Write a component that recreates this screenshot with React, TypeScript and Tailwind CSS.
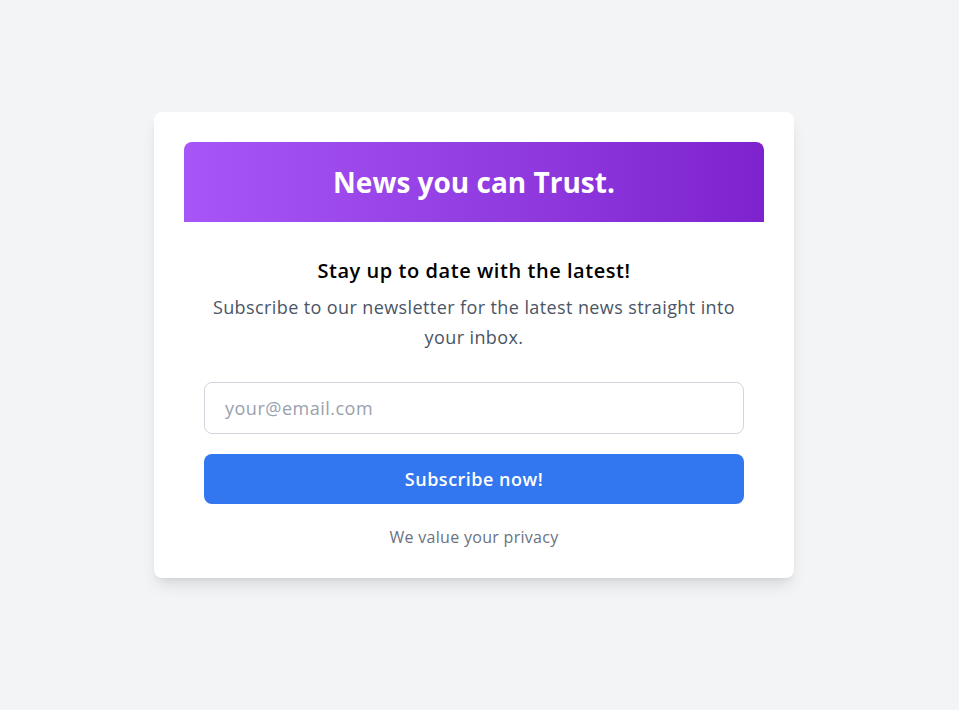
import React from 'react';

function App() {
  return (
    <div className="min-h-screen bg-gray-100 pt-[112px] pl-[154px]" style={{ fontFamily: '"Open Sans", "Noto Sans", sans-serif' }}>
      <div className="w-[640px] bg-white rounded-lg shadow-lg p-[30px]">
        <div className="h-[80px] rounded-t-lg bg-gradient-to-r from-[#a855f7] to-[#7e22ce] flex items-center justify-center">
          <h1 className="text-[28px] font-bold text-white">News you can Trust.</h1>
        </div>
        <div className="px-5 pt-[34px] text-center">
          <h2 className="text-[20px] font-semibold text-black leading-[30px] tracking-[0.55px]">
            Stay up to date with the latest!
          </h2>
          <p className="mt-[6px] text-[18px] leading-[30px] text-gray-600 tracking-[0.4px]">
            Subscribe to our newsletter for the latest news straight into
            <br />
            your inbox.
          </p>
          <input
            type="email"
            placeholder="your@email.com"
            className="mt-[30px] w-full h-[52px] rounded-lg border border-gray-300 px-5 text-[18px] tracking-[0.5px] placeholder:text-gray-400 outline-none"
          />
          <button className="mt-[20px] w-full h-[50px] rounded-lg bg-[#3377f0] text-white text-[18px] font-semibold tracking-[0.5px]">
            Subscribe now!
          </button>
          <p className="mt-[23px] text-[16px] text-gray-500 leading-[21px] tracking-[0.3px]">We value your privacy</p>
        </div>
      </div>
    </div>
  );
}

export default App;
